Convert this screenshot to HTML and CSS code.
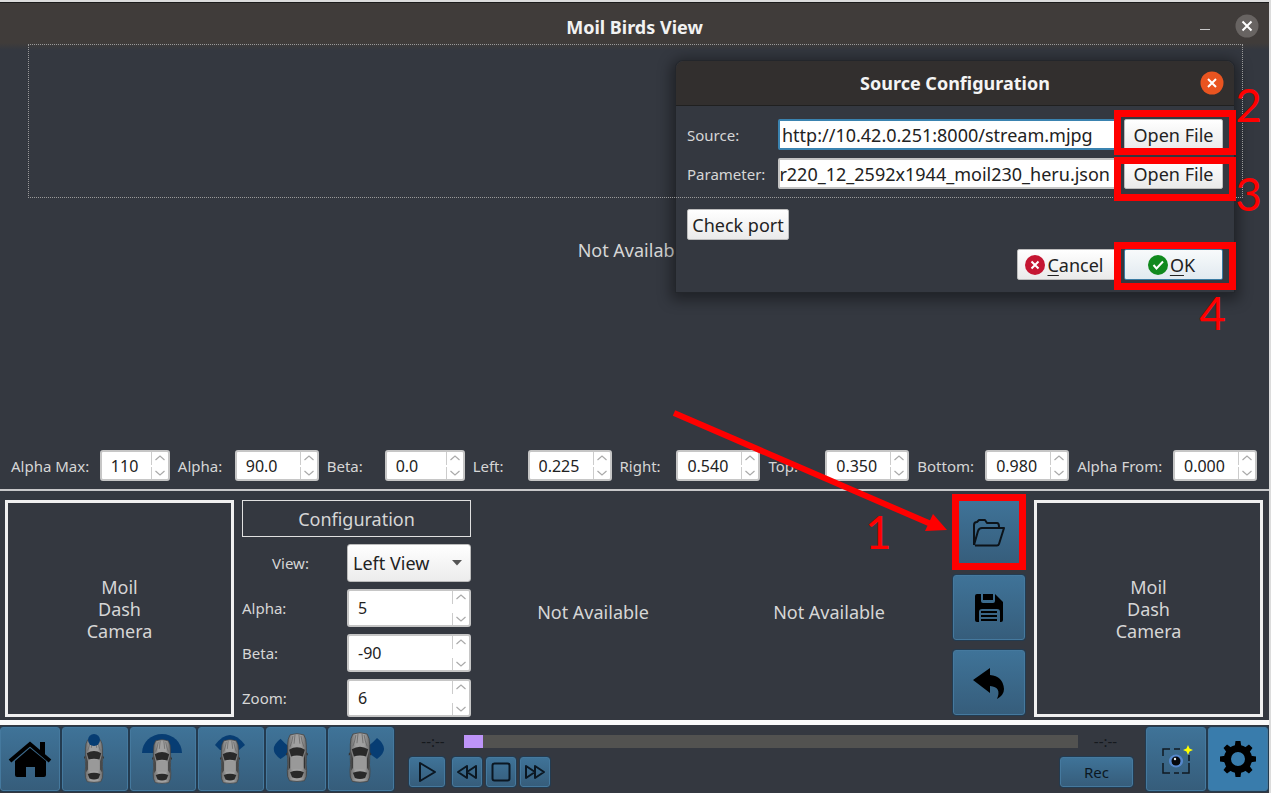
FILE: index.html
```html
<!DOCTYPE html>
<html lang="en">
<head>
<meta charset="utf-8">
<title>Moil Birds View</title>
<link rel="stylesheet" href="styles.css">
</head>
<body>
<svg class="defs" aria-hidden="true">
  <defs>
    <linearGradient id="paint" x1="0" x2="1"><stop offset="0" stop-color="#686868"/><stop offset=".3" stop-color="#a0a0a0"/><stop offset=".7" stop-color="#a0a0a0"/><stop offset="1" stop-color="#686868"/></linearGradient>
    <symbol id="car" viewBox="0 0 24 50">
      <path d="M1 21l2-2v3l-2 1zM23 21l-2-2v3l2 1z" fill="#333"/>
      <path d="M5 2Q12-.5 19 2q2.500 4 2.500 10v14q-.5 6 .3 12 .5 7-2.300 10.500-7.500 1.500-15 0Q1.700 45 2.200 38q.8-6 .3-12V12Q2.500 6 5 2z" fill="url(#paint)" stroke="#444" stroke-width=".8"/>
      <path d="M8 3q-1 6-3 11M16 3q1 6 3 11M10 2l-1 9M14 2l1 9" fill="none" stroke="#666" stroke-width=".8"/>
      <path d="M4 17q8-5 16 0l-2 7q-6-2-12 0z" fill="#292929"/>
      <path d="M3.500 19l1.500 7v9l-1.500 3zM20.500 19L19 26v9l1.500 3z" fill="#333"/>
      <path d="M6 25q6-1.500 12 0v12q-6-1.500-12 0z" fill="#999"/>
      <path d="M5 40q7-3 14 0l-2 5q-5 2-10 0z" fill="#292929"/>
    </symbol>
    <symbol id="step-up" viewBox="0 0 12 8"><path d="M1.500 6L6 2l4.500 4" fill="none" stroke="#aaa" stroke-width="1.200"/></symbol>
    <symbol id="step-down" viewBox="0 0 12 8"><path d="M1.500 2L6 6l4.500-4" fill="none" stroke="#aaa" stroke-width="1.200"/></symbol>
  </defs>
</svg>
<div class="window">
  <header class="titlebar">
    <h1>Moil Birds View</h1>
    <div class="window-buttons">
      <button class="minimize" aria-label="Minimize"><span></span></button>
      <button class="close" aria-label="Close"><svg viewBox="0 0 24 24"><circle cx="12" cy="12" r="11.500"/><path d="M7.500 7.500l9 9m0-9l-9 9"/></svg></button>
    </div>
  </header>

  <main class="view"><p>Not Available</p></main>

  <section class="params">
    <div class="param"><label for="amax">Alpha Max:</label><div class="spin narrow"><input id="amax" type="number" value="110"><span class="steps"><button aria-label="Up"><svg><use href="#step-up"/></svg></button><button aria-label="Down"><svg><use href="#step-down"/></svg></button></span></div></div>
    <div class="param"><label for="alpha">Alpha:</label><div class="spin"><input id="alpha" type="number" value="90.0"><span class="steps"><button aria-label="Up"><svg><use href="#step-up"/></svg></button><button aria-label="Down"><svg><use href="#step-down"/></svg></button></span></div></div>
    <div class="param"><label for="beta">Beta:</label><div class="spin medium"><input id="beta" type="number" value="0.0"><span class="steps"><button aria-label="Up"><svg><use href="#step-up"/></svg></button><button aria-label="Down"><svg><use href="#step-down"/></svg></button></span></div></div>
    <div class="param"><label for="left">Left:</label><div class="spin"><input id="left" type="number" step="any" value="0.225"><span class="steps"><button aria-label="Up"><svg><use href="#step-up"/></svg></button><button aria-label="Down"><svg><use href="#step-down"/></svg></button></span></div></div>
    <div class="param"><label for="right">Right:</label><div class="spin"><input id="right" type="number" step="any" value="0.540"><span class="steps"><button aria-label="Up"><svg><use href="#step-up"/></svg></button><button aria-label="Down"><svg><use href="#step-down"/></svg></button></span></div></div>
    <div class="param"><label for="top">Top:</label><div class="spin"><input id="top" type="number" step="any" value="0.350"><span class="steps"><button aria-label="Up"><svg><use href="#step-up"/></svg></button><button aria-label="Down"><svg><use href="#step-down"/></svg></button></span></div></div>
    <div class="param"><label for="bottom">Bottom:</label><div class="spin"><input id="bottom" type="number" step="any" value="0.980"><span class="steps"><button aria-label="Up"><svg><use href="#step-up"/></svg></button><button aria-label="Down"><svg><use href="#step-down"/></svg></button></span></div></div>
    <div class="param"><label for="afrom">Alpha From:</label><div class="spin"><input id="afrom" type="number" step="any" value="0.000"><span class="steps"><button aria-label="Up"><svg><use href="#step-up"/></svg></button><button aria-label="Down"><svg><use href="#step-down"/></svg></button></span></div></div>
  </section>

  <section class="panel">
    <div class="camera">Moil<br>Dash<br>Camera</div>
    <form class="config">
      <h2>Configuration</h2>
      <label class="centered" for="cview">View:</label>
      <div class="select"><select id="cview"><option>Left View</option></select><svg viewBox="0 0 10 6"><path d="M0 0h10L5 5.500z"/></svg></div>
      <label for="calpha">Alpha:</label>
      <div class="spin tall"><input id="calpha" type="number" value="5"><span class="steps"><button type="button" aria-label="Up"><svg><use href="#step-up"/></svg></button><button type="button" aria-label="Down"><svg><use href="#step-down"/></svg></button></span></div>
      <label for="cbeta">Beta:</label>
      <div class="spin tall"><input id="cbeta" type="number" value="-90"><span class="steps"><button type="button" aria-label="Up"><svg><use href="#step-up"/></svg></button><button type="button" aria-label="Down"><svg><use href="#step-down"/></svg></button></span></div>
      <label for="czoom">Zoom:</label>
      <div class="spin tall"><input id="czoom" type="number" value="6"><span class="steps"><button type="button" aria-label="Up"><svg><use href="#step-up"/></svg></button><button type="button" aria-label="Down"><svg><use href="#step-down"/></svg></button></span></div>
    </form>
    <div class="preview">Not Available</div>
    <div class="preview">Not Available</div>
    <div class="actions">
      <div class="marked">
        <button class="tool" aria-label="Open"><svg width="34" height="30" viewBox="0 0 34 30" fill="none" stroke="#0c1319" stroke-width="2" stroke-linejoin="round"><path d="M2 27V7q0-3 3-3l2-2h6l2 3h10q2 0 2 4M2 27L6 13q1-3 4-3h22L27 26q-.5 1.500-2 1.500H3"/></svg></button>
        <span class="mark-box step-open"></span>
        <span class="mark-number n1">1</span>
        <svg class="arrow" viewBox="0 0 280 130"><path d="M3 6L260 117" stroke="#f00" stroke-width="6"/><path d="M262 107l14 16-22 1z" fill="#f00"/></svg>
      </div>
      <button class="tool" aria-label="Save"><svg width="30" height="30" viewBox="0 0 30 30"><path d="M3 1H7v7q0 2 2 2h10q2 0 2-2V1l8 8v18q0 2-2 2h-1V19q0-3-3-3H8q-3 0-3 3v10H3q-2 0-2-2V3q0-2 2-2zM9 1h10v6H9z"/><path d="M7 19h16M7 23h16M7 27h16" stroke="#000" stroke-width="2"/></svg></button>
      <button class="tool" aria-label="Undo"><svg width="32" height="32" viewBox="0 0 32 32"><path d="M0 13L17 1v7q13 1 14 14 0 6-7 10 5-12-7-13v7z"/></svg></button>
    </div>
    <div class="camera">Moil<br>Dash<br>Camera</div>
  </section>

  <footer class="bar">
    <nav class="tools">
      <button class="tool small" aria-label="Home"><svg width="44" height="38" viewBox="0 0 44 38"><path d="M22 8L38 21v14q0 2-2 2H27V27h-9v10H9q-2 0-2-2V21z"/><path d="M2 21L22 4l20 17" fill="none" stroke="#000" stroke-width="4"/><path d="M32 2h5v13l-5-4z"/></svg></button>
      <button class="tool" aria-label="Front"><svg width="60" height="56" viewBox="0 0 60 56"><use href="#car" x="17" y="7" width="24" height="45"/><circle cx="29" cy="9" r="6" fill="#073d73"/></svg></button>
      <button class="tool" aria-label="Wide"><svg width="60" height="56" viewBox="0 0 60 56"><path d="M9 22a20 19 0 0 1 40 0z" fill="#073d73"/><use href="#car" x="17" y="8" width="24" height="45"/></svg></button>
      <button class="tool" aria-label="Front angle"><svg width="60" height="56" viewBox="0 0 60 56"><path d="M14 14Q29-6 44 14l-6 5H19z" fill="#073d73"/><use href="#car" x="17" y="8" width="24" height="45"/></svg></button>
      <button class="tool small" aria-label="Left side"><svg width="60" height="56" viewBox="0 0 60 56"><path d="M14 7q9 10 13 9-4 6-13 12-14-10 0-21z" fill="#073d73"/><use href="#car" x="17" y="1" width="28" height="51"/></svg></button>
      <button class="tool" aria-label="Right side"><svg width="60" height="56" viewBox="0 0 60 56"><path d="M46 7q-9 10-13 9 4 6 13 12 14-10 0-21z" fill="#073d73"/><use href="#car" x="15" y="1" width="28" height="51"/></svg></button>
    </nav>
    <div class="player">
      <div class="timeline"><span>--:--</span><div class="track"><div class="chunk"></div></div><span>--:--</span></div>
      <div class="transport">
        <button class="tool key play" aria-label="Play"><svg width="20" height="22" viewBox="0 0 20 22"><path d="M3 2l15 9L3 20z"/></svg></button>
        <button class="tool key" aria-label="Rewind"><svg width="22" height="16" viewBox="0 0 22 16"><path d="M11 2L2 8l9 6zM20 2l-9 6 9 6z"/></svg></button>
        <button class="tool key" aria-label="Stop"><svg width="20" height="20" viewBox="0 0 20 20"><rect x="1.500" y="1.500" width="17" height="17" rx="2"/></svg></button>
        <button class="tool key" aria-label="Forward"><svg width="22" height="16" viewBox="0 0 22 16"><path d="M2 2l9 6-9 6zM11 2l9 6-9 6z"/></svg></button>
        <button class="tool rec">Rec</button>
      </div>
    </div>
    <div class="tools">
      <button class="tool small" aria-label="Capture"><svg width="34" height="36" viewBox="0 0 34 36"><path d="M4 15V8h7M15 8h6M30 14v6M4 22v10h7M15 32h5M23 32h7V22" fill="none" stroke="#101a22" stroke-width="1.500"/><ellipse cx="17" cy="20" rx="7" ry="6.500" fill="#5688cc"/><circle cx="17" cy="20" r="4.500" fill="#06080c"/><circle cx="16" cy="18" r="1.200" fill="#eee"/><path d="M29 4l1.500 3.500L34 9l-3.500 1.500L29 14l-1.500-3.500L24 9l3.500-1.500z" fill="#ff0"/></svg></button>
      <button class="tool small active" aria-label="Settings"><svg width="40" height="40" viewBox="0 0 40 40"><circle cx="20" cy="20" r="10.500" fill="none" stroke="#000" stroke-width="7"/><g id="teeth"><path d="M16.500 9l1-7h5l1 7zM16.500 31l1 7h5l1-7zM9 16.500l-7 1v5l7 1zM31 16.500l7 1v5l-7 1z"/></g><use href="#teeth" transform="rotate(45 20 20)"/></svg></button>
    </div>
  </footer>

  <div class="dialog" role="dialog" aria-label="Source Configuration">
    <header>
      <h2>Source Configuration</h2>
      <button class="close orange" aria-label="Close dialog"><svg viewBox="0 0 24 24"><circle cx="12" cy="12" r="11.500"/><path d="M8 8l8 8m0-8l-8 8"/></svg></button>
    </header>
    <div class="fields">
      <label for="source">Source:</label><div class="field focus"><input id="source" type="text" value="http://10.42.0.251:8000/stream.mjpg"></div><button class="light">Open File</button>
      <label for="parameter">Parameter:</label><div class="field tail"><input id="parameter" type="text" value="r220_12_2592x1944_moil230_heru.json"></div><button class="light">Open File</button>
    </div>
    <button class="light check">Check port</button>
    <div class="answers">
      <button class="light"><svg width="20" height="20" viewBox="0 0 20 20"><circle cx="10" cy="10" r="10" fill="#c51632"/><path d="M6.500 6.500l7 7m0-7l-7 7" stroke="#fff" stroke-width="2"/></svg><span><u>C</u>ancel</span></button>
      <button class="light default"><svg width="20" height="20" viewBox="0 0 20 20"><circle cx="10" cy="10" r="10" fill="#118a1e"/><path d="M5.500 10l3 3.500 6.500-7" fill="none" stroke="#fff" stroke-width="2"/></svg><span><u>O</u>K</span></button>
    </div>
  </div>
  <div class="outline"></div>
  <div class="marks">
    <span class="mark-box b2"></span><span class="mark-box b3"></span><span class="mark-box b4"></span>
    <span class="mark-number n2">2</span><span class="mark-number n3">3</span><span class="mark-number n4">4</span>
  </div>
</div>
</body>
</html>
```
FILE: styles.css
```css
* { box-sizing: border-box; }
body {
  margin: 0;
  padding: 2px 2px 0 0;
  min-height: 100vh;
  display: flex;
  background: #dcdcdc;
  font-family: "Noto Sans", "Open Sans", sans-serif;
  font-size: 15px;
  line-height: 22px;
  color: #d6d6d6;
}
button, input, select { font: inherit; margin: 0; padding: 0; border: 0; }
button { display: flex; align-items: center; justify-content: center; }
h1, h2, p { margin: 0; font-size: 18px; }
.defs { position: absolute; width: 0; height: 0; }
.window {
  position: relative;
  flex: 1;
  min-width: 0;
  display: flex;
  flex-direction: column;
  background: #343840;
  overflow: hidden;
}
.titlebar {
  height: 48px;
  position: relative;
  display: flex;
  align-items: center;
  justify-content: center;
  border-top: 1px solid #1c1c1c;
  background: linear-gradient(#403c3a 85%, #343840);
  color: #f2f2f2;
}
.titlebar h1 { font-weight: 700; }
.window-buttons { position: absolute; right: 10px; top: 11px; display: flex; gap: 18px; }
.minimize { width: 24px; height: 24px; background: none; }
.minimize span { width: 10px; height: 1px; background: #c8c8c8; margin-top: 6px; }
.close { width: 24px; height: 24px; background: none; }
.close svg { width: 24px; height: 24px; fill: #686462; }
.close path { stroke: #fff; stroke-width: 2; }
.close.orange svg { fill: #e95420; }
.view { flex: 1; display: flex; align-items: center; justify-content: center; }
.view p { padding-right: 2px; }
.params {
  display: grid;
  grid-template-columns: 159fr 141fr 138fr 139fr 141fr 141fr 152fr 180fr;
  gap: 8px;
  padding: 0 12px 8px 11px;
  border-bottom: 2px solid #c8c8ca;
}
.param { display: flex; align-items: center; justify-content: space-between; white-space: nowrap; }
.spin {
  width: 84px;
  height: 31px;
  display: flex;
  background: #fff;
  border: 2px solid #c6c6c6;
  border-radius: 3px;
}
.spin.narrow { width: 70px; }
.spin.medium { width: 80px; }
.spin.tall { width: 124px; height: 38px; }
.spin input { flex: 1; min-width: 0; padding-left: 9px; background: none; color: #222; font-size: 16px; appearance: textfield; outline: 0; }
.spin input::-webkit-inner-spin-button { appearance: none; margin: 0; }
.steps { width: 17px; display: flex; flex-direction: column; justify-content: space-between; gap: 2px; }
.tall .steps { gap: 9px; }
.steps button { flex: 1; background: none; border-left: 1px solid #ccc; }
.steps svg { width: 12px; height: 8px; }
.panel {
  display: flex;
  align-items: stretch;
  padding: 9px 6px 3px 5px;
  border-bottom: 5px solid #fafafa;
}
.camera {
  flex: 0 0 229px;
  border: 3px solid #f0f0f0;
  display: flex;
  align-items: center;
  justify-content: center;
  text-align: center;
  font-size: 18px;
}
.config {
  flex: 0 0 229px;
  margin: 0 4px 0 8px;
  display: grid;
  grid-template-columns: 1fr 124px;
  gap: 7px 8px;
  align-items: center;
}
.config h2 {
  grid-column: 1 / 3;
  height: 37px;
  display: flex;
  align-items: center;
  justify-content: center;
  border: 1px solid #e0e0e0;
  font-weight: 400;
}
.config .centered { text-align: center; }
.select { position: relative; }
.select select {
  appearance: none;
  width: 100%;
  height: 38px;
  padding-left: 5px;
  border: 1px solid #bbb;
  border-radius: 3px;
  background: linear-gradient(#fff, #ececec);
  font-size: 18px;
  color: #222;
}
.select svg { position: absolute; right: 9px; top: 16px; width: 10px; height: 6px; fill: #555; }
.preview { flex: 1; display: flex; align-items: center; justify-content: center; font-size: 18px; padding-top: 6px; }
.actions { flex: 0 0 72px; margin: 0 9px 0 6px; display: flex; flex-direction: column; gap: 10px; }
.tool {
  width: 66px;
  height: 65px;
  flex: none;
  background: linear-gradient(#3f7398, #365d7b);
  border: 1px solid #45799e;
  border-radius: 3px;
  box-shadow: 0 0 0 1px #233b50;
}
.actions .tool { width: 72px; }
.marked { position: relative; }
.mark-box { position: absolute; border: 7px solid #f00; pointer-events: none; }
.mark-number { position: absolute; color: #f00; font: 46px/46px Lato, sans-serif; }
.step-open { left: -1px; top: -6px; width: 74px; height: 76px; }
.n1 { left: -88px; top: 9px; }
.arrow { position: absolute; right: 74px; top: -93px; width: 280px; height: 130px; pointer-events: none; }
.bar { display: flex; padding: 2px 1px 0 0; height: 68px; }
.tools { display: flex; gap: 2px; }
.bar .tool { background: linear-gradient(#3f7398, #365d7b); }
.bar .small { width: 60px; }
.bar .tool.active { background: #397cac; }
.bar .tools .tool { height: 64px; }
.player { flex: 1; padding: 7px 13px 0 15px; display: flex; flex-direction: column; gap: 9px; color: #15191e; }
.timeline { display: flex; align-items: center; height: 14px; }
.timeline span { width: 55px; text-align: center; line-height: 14px; }
.timeline span:first-child { padding-right: 7px; }
.track { flex: 1; height: 13px; background: #525250; }
.chunk { width: 19px; height: 13px; background: #bd94f8; }
.transport { display: flex; gap: 4px; }
.bar .key { width: 30px; height: 30px; }
.bar .play { width: 36px; margin-right: 3px; }
.key svg { fill: none; stroke: #0b1722; stroke-width: 2; stroke-linejoin: round; }
.bar .rec { width: 73px; height: 30px; margin-left: auto; color: #0b1722; }
.dialog {
  position: absolute;
  right: 34px;
  top: 58px;
  width: 560px;
  background: #343840;
  border: 1px solid #23262b;
  border-radius: 8px 8px 0 0;
  box-shadow: 0 3px 14px 4px rgba(0, 0, 0, .4);
  padding-bottom: 12px;
}
.dialog header {
  position: relative;
  height: 45px;
  display: flex;
  align-items: center;
  justify-content: center;
  background: #322f2e;
  border-bottom: 1px solid #202020;
  border-radius: 8px 8px 0 0;
  color: #f4f4f4;
}
.dialog .close { position: absolute; right: 10px; top: 10px; }
.fields {
  display: grid;
  grid-template-columns: 83px 1fr 99px;
  gap: 8px;
  align-items: center;
  padding: 13px 11px 0 11px;
}
.field {
  display: flex;
  min-width: 0;
  height: 31px;
  overflow: hidden;
  background: #fff;
  border: 2px solid #c4c4c4;
  border-radius: 2px;
}
.field input {
  flex: 1;
  min-width: 0;
  padding: 0 2px;
  background: none;
  color: #222;
  font-size: 18px;
  outline: 0;
}
.field.focus { border-color: #3a83b0; }
.tail { justify-content: flex-end; }
.tail input { flex: none; width: 360px; padding-right: 4px; text-align: right; }
.light {
  height: 31px;
  border: 1px solid #bcbcbc;
  border-radius: 2px;
  background: linear-gradient(#fff, #eaeaea);
  color: #222;
  font-size: 18px;
  white-space: nowrap;
}
.check { width: 102px; margin: 20px 0 0 11px; }
.answers { display: flex; justify-content: flex-end; gap: 8px; padding: 9px 11px 0 0; }
.answers .light { width: 99px; gap: 2px; padding-right: 4px; }
.answers u { text-underline-offset: 3px; }
.answers .default { border-color: #3a7ba3; background: linear-gradient(#f8fafb, #e1eaf0); }
.outline { position: absolute; left: 28px; right: 26px; top: 42px; height: 154px; border: 1px dotted #9a9a9a; pointer-events: none; }
.marks { position: absolute; right: 0; top: 0; width: 160px; height: 340px; pointer-events: none; }
.b2 { right: 33px; top: 108px; width: 122px; height: 45px; }
.b3 { right: 33px; top: 155px; width: 122px; height: 44px; }
.b4 { right: 33px; top: 240px; width: 122px; height: 48px; }
.n2 { right: 7px; top: 80px; }
.n3 { right: 7px; top: 169px; }
.n4 { right: 43px; top: 288px; }
```
